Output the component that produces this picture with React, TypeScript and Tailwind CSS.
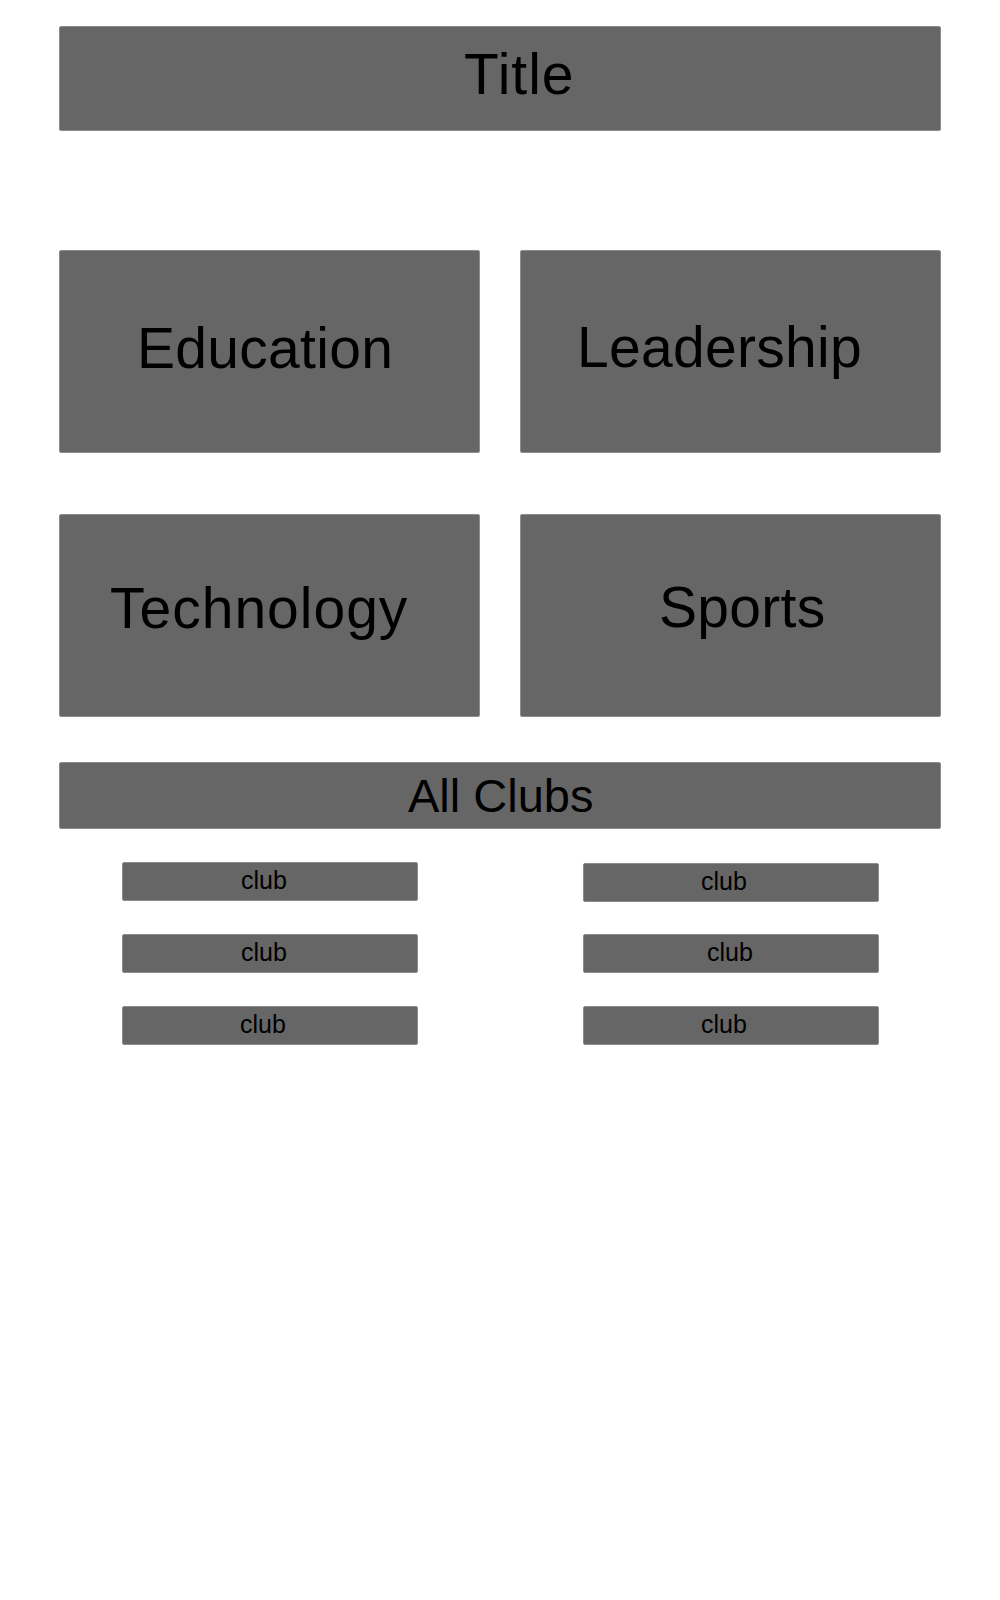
const box = "border border-[#8c8c8c] bg-[#666666] rounded-[2px] flex items-start leading-none text-black";

const categories = [
  { name: "Education", pad: "pt-[69px] pl-[77px] tracking-[0.3px]" },
  { name: "Leadership", pad: "pt-[68px] pl-[56px] tracking-[0.3px]" },
  { name: "Technology", pad: "pt-[65px] pl-[50px] tracking-[1px]" },
  { name: "Sports", pad: "pt-[64px] pl-[138px] tracking-[0.3px]" },
];

const leftClubs = ["pl-[118px]", "pl-[118px]", "pl-[117px]"];
const rightClubs = ["pl-[117px]", "pl-[123px]", "pl-[117px]"];

function Club({ pad, first }: { pad: string; first?: boolean }) {
  return (
    <div className={`${box} h-[39px] w-[296px] pt-[5px] text-[25px] ${pad} ${first ? "mt-[1px]" : ""}`}>
      club
    </div>
  );
}

export default function App() {
  return (
    <div className="min-h-[1600px] bg-white" style={{ fontFamily: '"Liberation Sans", Arial, sans-serif' }}>
      <div className="ml-[59px] w-[882px] pt-[26px]">
        <header className={`${box} h-[105px] pt-[19px] pl-[404px] text-[57px] tracking-[1px]`}>Title</header>

        <section className="mt-[119px] grid grid-cols-2 gap-x-[40px] gap-y-[61px]">
          {categories.map((c) => (
            <div key={c.name} className={`${box} h-[203px] text-[57px] ${c.pad}`}>
              {c.name}
            </div>
          ))}
        </section>

        <div className={`${box} mt-[45px] h-[67px] pt-[9px] pl-[348px] text-[47px]`}>All Clubs</div>

        <div className="mt-[33px] flex gap-[165px] pl-[63px]">
          <div className="flex flex-col gap-[33px]">
            {leftClubs.map((p, i) => (
              <Club key={i} pad={p} />
            ))}
          </div>
          <div className="flex flex-col">
            <Club pad={rightClubs[0]} first />
            <div className="mt-[32px]">
              <Club pad={rightClubs[1]} />
            </div>
            <div className="mt-[33px]">
              <Club pad={rightClubs[2]} />
            </div>
          </div>
        </div>
      </div>
    </div>
  );
}
